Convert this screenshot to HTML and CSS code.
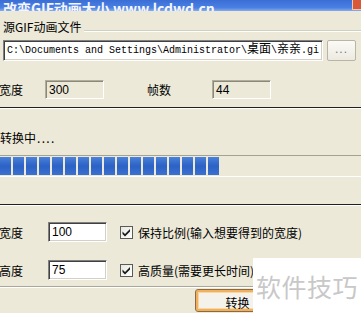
FILE: index.html
```html
<!DOCTYPE html>
<html lang="zh-CN">
<head>
    <meta charset="UTF-8">
    <meta name="viewport" content="width=device-width, initial-scale=1.0">
    <title>改变GIF动画大小</title>
    <link rel="stylesheet" href="styles.css">
</head>
<body>
    <div class="titlebar">
        <span class="title-text">改变GIF动画大小 www.lcdwd.cn</span>
        <span class="close-btn"></span>
    </div>

    <div class="group-header">
        <span class="group-label">源GIF动画文件</span>
        <span class="group-line"></span>
    </div>

    <div class="file-row">
        <div class="textbox path-box">C:\Documents and Settings\Administrator\<span class="cjk">桌面</span>\<span class="cjk">亲亲</span>.gi</div>
        <div class="small-btn">...</div>
    </div>

    <div class="info-row">
        <span class="label">宽度</span>
        <div class="textbox readonly">300</div>
        <span class="label label-frames">帧数</span>
        <div class="textbox readonly">44</div>
    </div>

    <div class="divider"></div>

    <div class="status">转换中<span class="dots">....</span></div>

    <div class="progress">
        <span class="block"></span><span class="block"></span><span class="block"></span><span class="block"></span>
        <span class="block"></span><span class="block"></span><span class="block"></span><span class="block"></span>
        <span class="block"></span><span class="block"></span><span class="block"></span><span class="block"></span>
        <span class="block"></span><span class="block"></span><span class="block"></span><span class="block"></span>
        <span class="block"></span>
    </div>

    <div class="divider divider-second"></div>

    <div class="opt-row">
        <span class="label">宽度</span>
        <div class="textbox">100</div>
        <span class="checkbox">
            <svg width="13" height="13" viewBox="0 0 13 13"><path d="M2.5 5.5 L5 8 L10 3 L10 5.5 L5 10.5 L2.5 8 Z" fill="#1a1a1a"/></svg>
        </span>
        <span class="check-label">保持比例(输入想要得到的宽度)</span>
    </div>

    <div class="opt-row opt-row-second">
        <span class="label">高度</span>
        <div class="textbox">75</div>
        <span class="checkbox">
            <svg width="13" height="13" viewBox="0 0 13 13"><path d="M2.5 5.5 L5 8 L10 3 L10 5.5 L5 10.5 L2.5 8 Z" fill="#1a1a1a"/></svg>
        </span>
        <span class="check-label">高质量(需要更长时间)</span>
    </div>

    <div class="etched"></div>

    <div class="button-row">
        <div class="main-btn">转换</div>
    </div>

    <div class="watermark">软件技巧</div>
</body>
</html>
```

FILE: styles.css
```css
body {
    margin: 0;
    width: 361px;
    height: 313px;
    overflow: hidden;
    position: relative;
    background: #ece9d8;
    font-family: "Noto Sans CJK SC", "Liberation Sans", sans-serif;
    font-size: 12px;
    color: #000;
}

.titlebar {
    height: 11px;
    display: flex;
    align-items: flex-end;
    justify-content: space-between;
    overflow: hidden;
    background: linear-gradient(to bottom, #3a6ed6, #4a80e2 70%, #86acec);
}

.title-text {
    color: #f4f6ff;
    font-size: 14px;
    font-weight: bold;
    line-height: 18px;
    margin-left: 3px;
    margin-bottom: -6px;
    white-space: nowrap;
}

.close-btn {
    width: 8px;
    height: 9px;
    align-self: flex-start;
    background: #d8583a;
    border-left: 1px solid #f0c8b8;
    border-bottom: 1px solid #f0c8b8;
}

.group-header {
    display: flex;
    margin-top: 9px;
    height: 13px;
}

.group-label {
    line-height: 13px;
    margin-left: 3px;
}

.group-line {
    flex: 1;
    height: 0;
    margin-top: 10px;
    margin-left: 3px;
    border-top: 1px solid #d0d0bf;
    border-bottom: 1px solid #fff;
}

.file-row {
    display: flex;
    margin-top: 7px;
    margin-left: 3px;
}

.textbox {
    box-sizing: border-box;
    height: 20px;
    width: 59px;
    background: #fff;
    border: 1px solid;
    border-color: #808080 #fff #fff #808080;
    box-shadow: inset 1px 1px #404040, inset -1px -1px #d4d0c8;
    padding-left: 3px;
    font-family: "Liberation Sans", sans-serif;
    font-size: 12px;
    line-height: 18px;
    white-space: nowrap;
    overflow: hidden;
}

.path-box {
    width: 320px;
    height: 21px;
    font-family: "Liberation Mono", monospace;
    font-size: 10px;
    line-height: 19px;
    padding-left: 3px;
}

.cjk {
    font-family: "Noto Sans CJK SC", sans-serif;
    font-size: 12px;
    display: inline-block;
    width: 24px;
    line-height: 12px;
}

.small-btn {
    box-sizing: border-box;
    width: 29px;
    height: 21px;
    margin-left: 4px;
    border: 1px solid #b8b5a6;
    border-radius: 2px;
    background: linear-gradient(to bottom, #fbfaf6, #eceae0);
    color: #7a7a7a;
    text-align: center;
    line-height: 16px;
    font-family: "Liberation Sans", sans-serif;
    letter-spacing: 1px;
}

.readonly {
    background: #ece9d8;
    box-shadow: inset 1px 1px #8a8878;
    border-color: #b0ad9c #fff #fff #b0ad9c;
}

.info-row {
    display: flex;
    align-items: center;
    margin-top: 19px;
    height: 19px;
}

.info-row .textbox {
    height: 19px;
}

.label {
    margin-left: -1px;
    width: 46px;
    line-height: 13px;
}

.label-frames {
    margin-left: 43px;
    width: 65px;
}

.divider {
    margin-top: 8px;
    border-top: 1px solid #202020;
    border-bottom: 1px solid #fff;
}

.status {
    margin-top: 22px;
    line-height: 13px;
}

.dots {
    letter-spacing: 1.3px;
    margin-left: 1px;
}

.progress {
    display: flex;
    gap: 2px;
    margin-top: 11px;
    padding: 1px 0;
    height: 18px;
    border-top: 1px solid #a5a28f;
    border-bottom: 1px solid #fff;
}

.block {
    width: 11px;
    height: 18px;
    background: linear-gradient(to bottom, #4a82dc, #2c62c4 50%, #3a70d2);
}

.divider-second {
    margin-top: 27px;
}

.opt-row {
    display: flex;
    align-items: center;
    margin-top: 16px;
    height: 20px;
}

.opt-row .label {
    width: 49px;
}

.opt-row-second {
    margin-top: 18px;
}

.checkbox {
    box-sizing: border-box;
    width: 13px;
    height: 13px;
    margin-left: 13px;
    border: 1px solid #5a5a5a;
    background: linear-gradient(to bottom right, #e8e8e0, #fff);
    display: flex;
}

.checkbox svg {
    margin: -1px;
}

.check-label {
    margin-left: 5px;
    line-height: 13px;
    white-space: nowrap;
}

.etched {
    margin-top: 6px;
    border-top: 1px solid #aca899;
    border-bottom: 1px solid #fff;
}

.button-row {
    display: flex;
    margin-top: 1px;
    padding-left: 195px;
}

.main-btn {
    box-sizing: border-box;
    width: 85px;
    height: 23px;
    border: 1px solid #8a6a40;
    border-radius: 3px;
    box-shadow: inset 0 0 0 2px #f0b060, inset 0 0 0 3px #f8d8a0;
    background: #f4f2ea;
    text-align: center;
    line-height: 21px;
    padding-top: 2px;
}

.watermark {
    position: absolute;
    left: 253px;
    top: 258px;
    right: 0;
    bottom: 0;
    background: #fff;
    color: #c8c8c8;
    font-size: 25px;
    line-height: 26px;
    padding-top: 15px;
    padding-left: 3px;
    letter-spacing: 0.5px;
    white-space: nowrap;
}
```
